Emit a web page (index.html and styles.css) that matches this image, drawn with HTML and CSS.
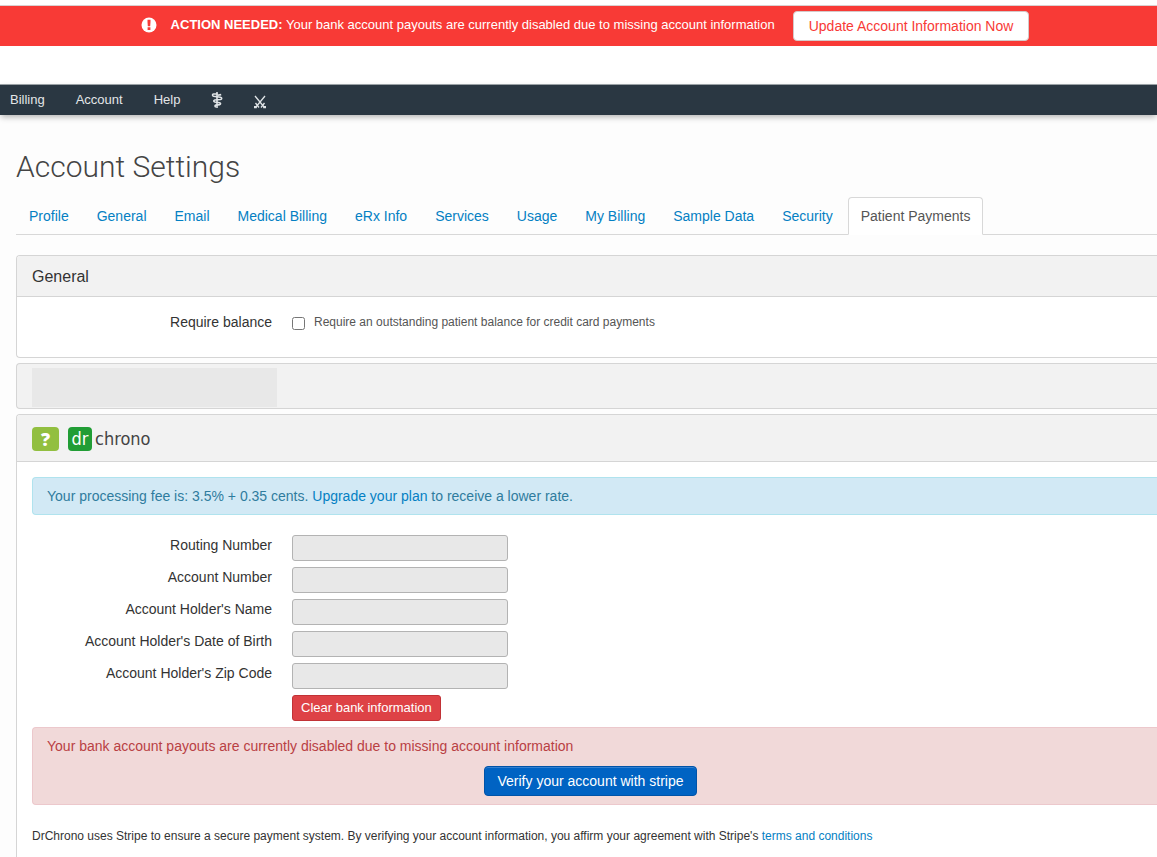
FILE: index.html
```html
<!DOCTYPE html>
<html lang="en">
<head>
<meta charset="utf-8">
<title>Account Settings</title>
<link rel="stylesheet" href="styles.css">
</head>
<body>
<div class="banner" role="alert">
  <svg class="banner-icon" viewBox="0 0 16 16" width="16" height="16" aria-hidden="true"><circle cx="8" cy="8" r="7.5" fill="#fff"/><path d="M6.5 2.800h3v2.200L9.200 9.200H6.800L6.500 5zM6.600 10.300h2.800v2.600H6.600z" fill="#f83a36"/></svg>
  <p class="banner-text"><strong>ACTION NEEDED:</strong> Your bank account payouts are currently disabled due to missing account information</p>
  <button class="banner-button" type="button">Update Account Information Now</button>
</div>
<nav class="navbar">
  <a href="#">Billing</a>
  <a href="#">Account</a>
  <a href="#">Help</a>
  <a href="#" aria-label="Clinical"><svg viewBox="0 0 12 18" width="12" height="18" fill="none" stroke="#dfe3e6"><path d="M6 1v16" stroke-width="1.600"/><path d="M6.500 3H2.500C1.200 3 1.200 5 2.500 5.300L9.500 6.300C11.200 6.800 11 8.200 9.500 8.500L3.800 9C2.400 9.400 2.400 10.600 3.800 11L8.600 11.700C10 12.200 9.800 13.300 8.600 13.600L4.800 14.100C3.600 14.600 3.800 15.600 5 15.900M6.500 4.300L10.200 3.600" stroke-width="1.600"/></svg></a>
  <a href="#" aria-label="Tools" class="nav-swords"><svg viewBox="0 0 12 14" width="12" height="14" fill="none" stroke="#dfe3e6" stroke-width="1.300"><path d="M1 1l9.500 11.500M11 1L1.500 12.500M1.500 8l3.500 4.500M10.500 8L7 12.500"/><path d="M0 11h2.800v2.200H0zM9.200 11H12v2.200H9.200z" fill="#dfe3e6" stroke="none"/></svg></a>
</nav>
<main class="page">
  <h1>Account Settings</h1>
  <ul class="tabs">
    <li><a href="#">Profile</a></li>
    <li><a href="#">General</a></li>
    <li><a href="#">Email</a></li>
    <li><a href="#">Medical Billing</a></li>
    <li><a href="#">eRx Info</a></li>
    <li><a href="#">Services</a></li>
    <li><a href="#">Usage</a></li>
    <li><a href="#">My Billing</a></li>
    <li><a href="#">Sample Data</a></li>
    <li><a href="#">Security</a></li>
    <li><a href="#" class="active" aria-current="page">Patient Payments</a></li>
  </ul>

  <section class="panel">
    <h2 class="panel-head">General</h2>
    <div class="panel-body general-body">
      <div class="row">
        <span class="label">Require balance</span>
        <input type="checkbox" id="balance" class="check">
        <label for="balance" class="check-label">Require an outstanding patient balance for credit card payments</label>
      </div>
    </div>
  </section>

  <section class="panel blank-panel"><div class="blank"></div></section>

  <section class="panel payments">
    <header class="panel-head brand-head">
      <button type="button" class="help">?</button>
      <span class="brand"><span class="brand-dr">dr</span><span class="brand-name">chrono</span></span>
    </header>
    <div class="panel-body">
      <p class="alert info">Your processing fee is: 3.5% + 0.35 cents. <a href="#">Upgrade your plan</a> to receive a lower rate.</p>
      <form class="form">
        <div class="row"><label class="label" for="routing">Routing Number</label><input class="field" id="routing" type="text" disabled></div>
        <div class="row"><label class="label" for="account">Account Number</label><input class="field" id="account" type="text" disabled></div>
        <div class="row"><label class="label" for="holder">Account Holder's Name</label><input class="field" id="holder" type="text" disabled></div>
        <div class="row"><label class="label" for="dob">Account Holder's Date of Birth</label><input class="field" id="dob" type="text" disabled></div>
        <div class="row"><label class="label" for="zip">Account Holder's Zip Code</label><input class="field" id="zip" type="text" disabled></div>
        <div class="row"><span class="label"></span><button type="button" class="clear">Clear bank information</button></div>
      </form>
      <div class="alert error">
        <p>Your bank account payouts are currently disabled due to missing account information</p>
        <button type="button" class="verify">Verify your account with stripe</button>
      </div>
      <p class="terms">DrChrono uses Stripe to ensure a secure payment system. By verifying your account information, you affirm your agreement with Stripe's <a href="#">terms and conditions</a></p>
    </div>
  </section>
</main>
</body>
</html>
```
FILE: styles.css
```css
* { box-sizing: border-box; }
body {
  margin: 0;
  min-height: 100vh;
  display: flex;
  flex-direction: column;
  background: #fff;
  color: #333;
  font: 14px/20px "Liberation Sans", Arial, sans-serif;
}
h1, h2, p, ul { margin: 0; padding: 0; }
a { color: #0480c3; text-decoration: none; }
button { font-family: inherit; cursor: pointer; }

.banner {
  display: flex;
  align-items: center;
  justify-content: center;
  height: 41px;
  margin-top: 5px;
  padding-left: 13px;
  border-top: 1px solid #d9d0d0;
  background: #f83a36;
  color: #fff;
  font-size: 13px;
  white-space: nowrap;
}
.banner-icon { margin: 0 14px 2px 0; }
.banner-text { margin-right: 18px; padding-bottom: 2px; }
.banner-button {
  height: 30px;
  padding: 0 15px;
  border: 1px solid #d5c9c9;
  border-radius: 4px;
  background: #fff;
  color: #f83a36;
  font-size: 14px;
}

.navbar {
  position: relative;
  display: flex;
  align-items: center;
  gap: 31px;
  height: 31px;
  margin-top: 38px;
  padding-left: 10px;
  border-top: 1px solid #9aa1a5;
  background: #2a3742;
  box-shadow: 0 3px 6px -1px rgba(0, 0, 0, .3);
  font-size: 13px;
}
.navbar a { color: #e3e6e8; }
.navbar svg { display: block; }
.nav-swords { padding-top: 4px; }

.page {
  flex: 1;
  display: flex;
  flex-direction: column;
  padding: 32px 0 0 16px;
  background: #fdfdfd;
}
h1 {
  color: #444;
  font: 300 30px/40px Roboto, sans-serif;
}
.tabs {
  display: flex;
  gap: 2px;
  margin: 10px 0 20px;
  border-bottom: 1px solid #d8d8d8;
  list-style: none;
  white-space: nowrap;
}
.tabs a {
  display: block;
  margin-bottom: -1px;
  padding: 8px 12px;
  border: 1px solid transparent;
  border-radius: 4px 4px 0 0;
}
.tabs .active {
  border-color: #d8d8d8 #d8d8d8 #fff;
  background: #fff;
  color: #555;
}

.panel {
  margin-bottom: 5px;
  border: 1px solid #d5d5d5;
  border-right: 0;
  border-radius: 4px 0 0 4px;
  background: #fff;
}
.panel-head {
  padding: 11px 15px 9px;
  border-bottom: 1px solid #d5d5d5;
  border-radius: 3px 0 0 0;
  background: #f2f2f2;
  font-size: 16px;
  font-weight: 400;
  line-height: 20px;
}
.panel-body { padding: 15px 0 0 15px; }
.general-body { padding-bottom: 25px; }
.row { display: flex; }
.label {
  width: 240px;
  margin-right: 20px;
  text-align: right;
}
.check { width: 13px; height: 13px; margin: 5px 9px 0 0; }
.check-label { color: #555; font-size: 12px; }

.blank-panel { padding: 4px 15px 1px; background: #f2f2f2; }
.blank { width: 245px; height: 39px; background: #e8e8e8; }

.payments {
  flex: 1;
  margin-bottom: 0;
  border-bottom: 0;
  border-radius: 4px 0 0 0;
}
.brand-head { display: flex; align-items: center; gap: 9px; height: 47px; }
.help {
  width: 27px;
  height: 24px;
  padding: 0;
  border: 0;
  border-radius: 4px;
  background: #92bf40;
  color: #fff;
  font: 800 18px/24px "Open Sans", sans-serif;
}
.brand {
  display: flex;
  align-items: center;
  gap: 3px;
  color: #444;
  font: 18px/24px "DejaVu Sans Condensed", "DejaVu Sans", sans-serif;
}
.brand-dr {
  width: 24px;
  height: 24px;
  border-radius: 4px;
  background: #219d35;
  color: #fff;
  text-align: center;
}

.alert {
  padding: 8px 23px 8px 14px;
  border: 1px solid;
  border-right: 0;
  border-radius: 4px 0 0 4px;
}
.info { margin-bottom: 20px; background: #d2e9f5; border-color: #b0e3ee; color: #2f7c9e; }
.form { display: grid; gap: 6px; margin-bottom: 6px; }
.field {
  width: 216px;
  height: 26px;
  border: 1px solid #b3b3b3;
  border-radius: 3px;
  background: #e8e8e8;
}
.clear {
  height: 26px;
  padding: 0 8px 2px;
  border: 1px solid #c13236;
  border-radius: 3px;
  background: #de4246;
  color: #fff;
  font-size: 13px;
}
.error { background: #f1d9d9; border-color: #ecc8cc; color: #b94043; }
.verify {
  display: block;
  height: 30px;
  margin: 10px auto 0;
  padding: 0 13px;
  border: 1px solid #0053a8;
  border-radius: 4px;
  background: #0063c3;
  box-shadow: inset 0 1px 0 #3380d0;
  color: #fff;
  font-size: 14px;
}
.terms { margin-top: 21px; font-size: 12px; }
```
